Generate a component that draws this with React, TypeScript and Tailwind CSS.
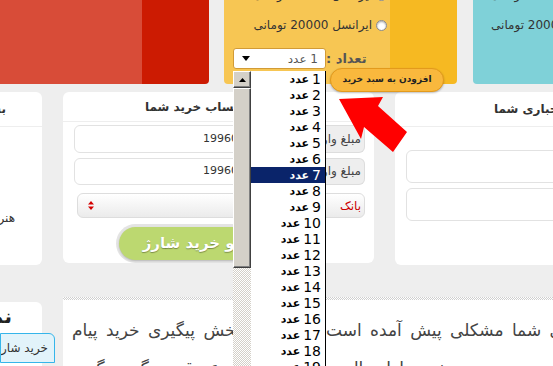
import React from "react";

const counts = Array.from({ length: 19 }, (_, i) => i + 1);

const Radio = () => (
  <span className="inline-block w-[11px] h-[11px] shrink-0 rounded-full bg-white border border-[#8a8a8a] shadow-[inset_0_1px_2px_rgba(0,0,0,0.35)]" />
);

const OptionRow = ({ label, top }: { label: string; top?: boolean }) => (
  <div className={`flex h-[30px] items-center justify-end gap-[4px] pr-[70px] ${top ? "-mt-[20px]" : ""}`}>
    <span dir="rtl" className="whitespace-nowrap text-[12px] text-[#333]">
      {label}
    </span>
    <Radio />
  </div>
);

const Win3d = "bg-[#d4d0c8] border border-t-white border-l-white border-b-[#404040] border-r-[#404040] shadow-[inset_-1px_-1px_0_#808080]";

export default function App() {
  return (
    <div className="relative w-[553px] h-[366px] overflow-hidden bg-[#eeeeee] font-['DejaVu_Sans',sans-serif] text-[#333]">
      {/* package cards */}
      <div className="flex h-[84px]">
        <div className="w-[209px] shrink-0 rounded-br-[4px] bg-[linear-gradient(to_right,#d84c38_142px,#cc1b02_142px)]" />
        <div className="ml-[15px] w-[233px] shrink-0 rounded-b-[4px] bg-[linear-gradient(to_right,#f7c653_166px,#f6b922_166px)]">
          <OptionRow label="ایرانسل 10000 تومانی" top />
          <OptionRow label="ایرانسل 20000 تومانی" />
          <div className="mt-[8px] flex h-[21px] items-center">
            <div className="ml-[9px] flex h-[21px] w-[93px] shrink-0 items-center justify-between rounded-[3px] border border-[#d29b36] bg-white pl-[8px] pr-[7px]">
              <svg width="8" height="5" viewBox="0 0 8 5">
                <path d="M0 0H8L4 5Z" fill="#000" />
              </svg>
              <span dir="rtl" className="text-[12px] text-[#555]">
                1 عدد
              </span>
            </div>
            <span dir="rtl" className="ml-auto mr-[91px] shrink-0 whitespace-nowrap text-[13px] font-bold text-[#555]">
              تعداد :
            </span>
          </div>
          <div className="-mt-[1px] flex">
            <button className="relative z-10 ml-[106px] flex h-[24px] w-[114px] items-center justify-center rounded-full border border-[#e39a1c] bg-[#f9b83d] shadow-[0_1px_2px_rgba(0,0,0,0.25)]">
              <span dir="rtl" className="text-[9px] font-bold text-[#222]">
                افزودن به سبد خرید
              </span>
            </button>
          </div>
        </div>
        <div className="ml-[16px] w-[233px] shrink-0 rounded-b-[4px] bg-[#7fd1d8]">
          <OptionRow label="همراه اول 10000 تومانی" top />
          <OptionRow label="همراه اول 20000 تومانی" />
        </div>
      </div>

      {/* form cards */}
      <div className="mt-[8px] flex h-[173px] items-start">
        <div className="h-[173px] w-[42px] shrink-0 overflow-hidden rounded-r-[6px] bg-white">
          <div className="flex h-[35px] items-center justify-end border-b border-[#eee] pr-[36px]">
            <span dir="rtl" className="shrink-0 whitespace-nowrap text-[12px] font-bold">
              بسته ها
            </span>
          </div>
          <div className="mt-[84px] flex h-[14px] items-center justify-end pr-[27px]">
            <span dir="rtl" className="shrink-0 whitespace-nowrap text-[12px]">
              هنرمندان
            </span>
          </div>
        </div>

        <div className="ml-[21px] flex h-[171px] w-[311px] shrink-0 flex-col rounded-[6px] bg-white">
          <div className="flex h-[35px] items-center border-b border-[#eee] pl-[82px]">
            <span dir="rtl" className="shrink-0 whitespace-nowrap text-[12px] font-bold">
              صورت حساب خرید شما
            </span>
          </div>
          {["1996000000", "1996000000"].map((v, i) => (
            <div key={i} className={`ml-[11px] flex h-[32px] w-[291px] ${i === 0 ? "mt-[3px]" : "mt-[5px]"}`}>
              <div className="flex flex-1 items-center rounded-l-[6px] border border-[#e2e2e2] pl-[128px] text-[11px] text-[#333]">
                {v}
              </div>
              <div className="flex w-[75px] items-center justify-end rounded-r-[6px] border border-l-0 border-[#ddd] bg-[#eeeeee] pr-[3px]">
                <span dir="rtl" className="whitespace-nowrap text-[12px] text-[#444]">
                  مبلغ واریزی
                </span>
              </div>
            </div>
          ))}
          <div className="ml-[14px] mt-[8px] flex h-[29px] w-[288px] items-center justify-between rounded-[6px] border border-[#ddd] bg-gradient-to-b from-white to-[#ebebeb] pl-[10px] pr-[3px]">
            <svg width="6" height="9" viewBox="0 0 6 9">
              <path d="M0 3.5L3 0L6 3.5ZM0 5.5L3 9L6 5.5Z" fill="#d40000" />
            </svg>
            <span dir="rtl" className="text-[12px] text-[#cc0000]">
              بانک
            </span>
          </div>
          <div className="relative z-10 mx-auto mt-[6px] h-[44px] w-[206px] rounded-full bg-[#e4e4e4] p-[3px]">
            <div className="flex h-full items-center justify-center rounded-full bg-[#bcd870] shadow-[0_1px_2px_rgba(0,0,0,0.2)]">
              <span dir="rtl" className="whitespace-nowrap text-[15px] font-bold text-white [text-shadow:0_1px_1px_rgba(0,0,0,0.35)]">
                پرداخت و خرید شارژ
              </span>
            </div>
          </div>
        </div>

        <div className="ml-[21px] h-[173px] w-[311px] shrink-0 rounded-[6px] bg-white">
          <div className="flex h-[35px] items-center border-b border-[#eee] pl-[99px]">
            <span dir="rtl" className="shrink-0 whitespace-nowrap text-[12px] font-bold">
              اطلاعات اجباری شما
            </span>
          </div>
          <div className="ml-[11px] mt-[23px] h-[33px] w-[290px] rounded-[6px] border border-[#e2e2e2]" />
          <div className="ml-[11px] mt-[5px] h-[33px] w-[290px] rounded-[6px] border border-[#e2e2e2]" />
        </div>
      </div>

      {/* bottom content */}
      <div className="mt-[32px] flex">
        <div className="mt-[5px] h-[70px] w-[42px] shrink-0 rounded-tr-[6px] bg-white">
          <div className="flex h-[28px] items-center justify-end overflow-hidden pr-[30px]">
            <span dir="rtl" className="shrink-0 whitespace-nowrap text-[20px] font-bold text-[#222]">
              نمونه
            </span>
          </div>
          <div className="relative z-10 mt-[3px] flex h-[30px] w-[55px] items-center justify-end overflow-hidden rounded-tr-[6px] border border-[#35b5ea] bg-[#e2f3fa] pr-[6px]">
            <span dir="rtl" className="shrink-0 whitespace-nowrap text-[12px] text-[#333]">
              خرید شارژ
            </span>
          </div>
        </div>
        <div className="ml-[21px] h-[69px] flex-1 overflow-hidden bg-white">
          <div className="h-[3px] bg-[repeating-conic-gradient(#cfcfcf_0_25%,#fff_0_50%)] bg-[length:2px_2px]" />
          <div className="mt-[11px] text-[17px] leading-[38px] text-[#444] [word-spacing:3px]">
            <div className="flex pl-[9px]">
              <div className="flex w-[250px] shrink-0 overflow-hidden">
                <span dir="rtl" className="shrink-0 whitespace-nowrap">
                  با استفاده از بخش پیگیری خرید پیام
                </span>
              </div>
              <div className="flex flex-1 overflow-hidden pl-[4px]">
                <span dir="rtl" className="shrink-0 whitespace-nowrap">
                  در صورتی که برای شما مشکلی پیش آمده است
                </span>
              </div>
            </div>
            <div className="flex pl-[9px]">
              <span dir="rtl" className="shrink-0 whitespace-nowrap">
                خود را ارسال نمایید تا در اسرع وقت پیگیری گردد
              </span>
            </div>
          </div>
        </div>
      </div>

      {/* open select list */}
      <div className="absolute left-[233px] top-[71px] z-20 flex h-[296px] w-[93px]">
        <div className="flex w-[18px] shrink-0 flex-col bg-[repeating-conic-gradient(#d4d0c8_0_25%,#fff_0_50%)] bg-[length:2px_2px]">
          <div className={`flex h-[17px] items-center justify-center ${Win3d}`}>
            <svg width="7" height="4" viewBox="0 0 7 4">
              <path d="M0 4H7L3.5 0Z" fill="#000" />
            </svg>
          </div>
          <div className={`h-[180px] ${Win3d}`} />
        </div>
        <div className="flex-1 border-r border-black bg-white">
          {counts.map((n) => (
            <div
              key={n}
              dir="rtl"
              className={`flex h-[16px] items-center gap-[3px] pr-[4px] ${n === 7 ? "bg-[#0a246a] text-white" : "text-black"}`}
            >
              <span className="text-[14px] leading-none">{n}</span>
              <span className="text-[11px] font-bold leading-none">عدد</span>
            </div>
          ))}
        </div>
      </div>

      {/* pointer arrow */}
      <svg className="pointer-events-none absolute left-0 top-0 z-30" width="553" height="366" viewBox="0 0 553 366">
        <polygon points="339,99 383,97 378,106 407,132 393,152 364,127 361,139" fill="#ff0000" />
      </svg>
    </div>
  );
}
